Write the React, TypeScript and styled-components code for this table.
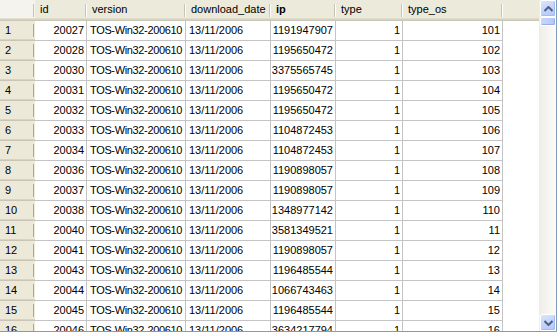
import React from "react";
import styled, { createGlobalStyle } from "styled-components";

const GlobalStyle = createGlobalStyle`
  html, body {
    margin: 0;
    padding: 0;
    background: #ffffff;
  }
  body {
    font-family: "Liberation Sans", Arial, sans-serif;
    font-size: 11px;
    color: #000000;
  }
`;

type Align = "left" | "right";

type Column = {
  key: string;
  title: string;
  width: number;
  align: Align;
  bold?: boolean;
  tight?: boolean;
};

const columns: Column[] = [
  { key: "id", title: "id", width: 52, align: "right" },
  { key: "version", title: "version", width: 99, align: "left", tight: true },
  { key: "date", title: "download_date", width: 85, align: "left" },
  { key: "ip", title: "ip", width: 65, align: "right", bold: true },
  { key: "type", title: "type", width: 67, align: "right" },
  { key: "typeOs", title: "type_os", width: 100, align: "right" },
];

const ips = [
  "1191947907",
  "1195650472",
  "3375565745",
  "1195650472",
  "1195650472",
  "1104872453",
  "1104872453",
  "1190898057",
  "1190898057",
  "1348977142",
  "3581349521",
  "1190898057",
  "1196485544",
  "1066743463",
  "1196485544",
  "3634217794",
];
const ids = [
  20027, 20028, 20030, 20031, 20032, 20033, 20034, 20036, 20037, 20038, 20040,
  20041, 20043, 20044, 20045, 20046,
];
const typeOs = [101, 102, 103, 104, 105, 106, 107, 108, 109, 110, 11, 12, 13, 14, 15, 16];

const rows = ids.map((id, i) => ({
  id: String(id),
  version: "TOS-Win32-200610",
  date: "13/11/2006",
  ip: ips[i],
  type: "1",
  typeOs: String(typeOs[i]),
}));

const App = () => {
  return (
    <>
      <GlobalStyle />
      <Window>
        <Grid>
          <HeaderRow>
            <Corner />
            {columns.map((c) => (
              <HeaderCell key={c.key} $w={c.width} $bold={c.bold}>
                {c.title}
              </HeaderCell>
            ))}
            <HeaderFill />
          </HeaderRow>
          <Body>
            {rows.map((r, i) => (
              <Row key={i}>
                <RowHead>{i + 1}</RowHead>
                {columns.map((c) => (
                  <Cell key={c.key} $w={c.width} $align={c.align} $tight={c.tight}>
                    {(r as Record<string, string>)[c.key]}
                  </Cell>
                ))}
              </Row>
            ))}
          </Body>
        </Grid>
        <ScrollBar>
          <ArrowButton>
            <svg width="9" height="6" viewBox="0 0 9 6">
              <path d="M0.5 5 L4.5 1 L8.5 5" fill="none" stroke="#4d6185" strokeWidth="2" />
            </svg>
          </ArrowButton>
          <Thumb />
          <Track />
          <ArrowButton>
            <svg width="9" height="6" viewBox="0 0 9 6">
              <path d="M0.5 1 L4.5 5 L8.5 1" fill="none" stroke="#4d6185" strokeWidth="2" />
            </svg>
          </ArrowButton>
        </ScrollBar>
      </Window>
    </>
  );
};

export default App;

const Window = styled.div`
  width: 556px;
  height: 331px;
  display: flex;
  border-right: 1px solid #7f9db9;
  border-bottom: 1px solid #7f9db9;
  overflow: hidden;
  background: #ffffff;
`;

const Grid = styled.div`
  flex: 1;
  display: flex;
  flex-direction: column;
  overflow: hidden;
`;

const headerBg = `
  linear-gradient(#cbc7b8, #cbc7b8) no-repeat left bottom / 100% 1px,
  linear-gradient(#d6d2c2, #d6d2c2) no-repeat left bottom 1px / 100% 1px,
  linear-gradient(#e2decd, #e2decd) no-repeat left bottom 2px / 100% 1px
`;

const HeaderRow = styled.div`
  display: flex;
  height: 21px;
  flex-shrink: 0;
  background: ${headerBg}, #ebeadb;
`;

const Corner = styled.div`
  width: 35px;
  flex-shrink: 0;
  background:
    linear-gradient(#c7c5b2, #c7c5b2) no-repeat right 1px top 4px / 1px 13px,
    ${headerBg},
    #f4f3ee;
`;

const HeaderCell = styled.div<{ $w: number; $bold?: boolean }>`
  width: ${(p) => p.$w}px;
  flex-shrink: 0;
  box-sizing: border-box;
  padding: 0 0 0 5px;
  line-height: 19px;
  font-weight: ${(p) => (p.$bold ? 700 : 400)};
  white-space: nowrap;
  overflow: hidden;
  background:
    linear-gradient(#c7c5b2, #c7c5b2) no-repeat right 1px top 4px / 1px 13px,
    linear-gradient(#ffffff, #ffffff) no-repeat right 0 top 4px / 1px 13px;
`;

const HeaderFill = styled.div`
  flex: 1;
`;

const Body = styled.div`
  display: flex;
  flex-direction: column;
`;

const Row = styled.div`
  display: flex;
  height: 20px;
  flex-shrink: 0;
`;

const RowHead = styled.div`
  width: 35px;
  flex-shrink: 0;
  box-sizing: border-box;
  padding-left: 5px;
  line-height: 19px;
  background:
    linear-gradient(#aca899, #aca899) no-repeat right 1px top 3px / 1px 13px,
    linear-gradient(#c9c5b6, #c9c5b6) no-repeat left bottom / 100% 1px,
    linear-gradient(#d8d4c4, #d8d4c4) no-repeat left bottom 1px / 100% 1px,
    #ece9d8;
`;

const Cell = styled.div<{ $w: number; $align: Align; $tight?: boolean }>`
  width: ${(p) => p.$w}px;
  flex-shrink: 0;
  box-sizing: border-box;
  border-right: 1px solid #c4c4c4;
  border-bottom: 1px solid #c4c4c4;
  padding: ${(p) => (p.$align === "right" ? "0 2px 0 0" : "0 0 0 3px")};
  text-align: ${(p) => p.$align};
  letter-spacing: ${(p) => (p.$tight ? "-0.35px" : "0")};
  line-height: 19px;
  white-space: nowrap;
  overflow: hidden;
`;

const ScrollBar = styled.div`
  width: 17px;
  flex-shrink: 0;
  display: flex;
  flex-direction: column;
  background: linear-gradient(90deg, #eeede5 0%, #f5f4ef 50%, #fbfbf9 100%);
`;

const ArrowButton = styled.div`
  height: 17px;
  flex-shrink: 0;
  box-sizing: border-box;
  margin: 0 0 0 1px;
  display: flex;
  align-items: center;
  justify-content: center;
  border: 1px solid #ffffff;
  border-radius: 2px;
  background: linear-gradient(160deg, #dbe6fd 0%, #c2d3fc 50%, #b4c8f6 100%);
  box-shadow: inset -1px -1px 0 #a5bbef;
`;

const Thumb = styled.div`
  height: 9px;
  flex-shrink: 0;
  box-sizing: border-box;
  margin: 0 0 0 1px;
  border: 1px solid #ffffff;
  border-radius: 2px;
  background: linear-gradient(90deg, #c8d6fb 0%, #bccdf8 60%, #b2c5f4 100%);
  box-shadow: inset -1px -1px 0 #98b0ea;
`;

const Track = styled.div`
  flex: 1;
`;
